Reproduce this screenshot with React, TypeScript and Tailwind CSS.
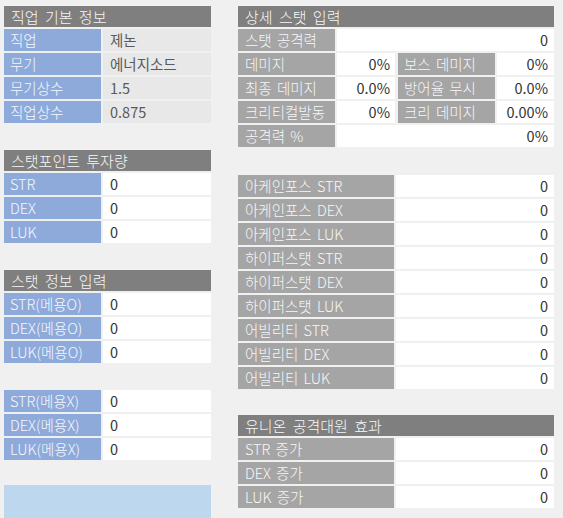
import React from "react";

const font = { fontFamily: '"Noto Sans CJK KR", "Noto Sans", sans-serif' };

const labelTxt = "text-[14.5px] leading-[22px] [word-spacing:2px] font-light whitespace-nowrap overflow-hidden";
const valTxt = "text-[14.5px] leading-[22px] whitespace-nowrap";

function Header({ children }: { children: React.ReactNode }) {
  return (
    <div className="h-[21px] bg-[#7f7f7f] text-[#f7f7f7] text-[15px] leading-[21px] [word-spacing:3px] font-light pl-[7px] whitespace-nowrap overflow-hidden">
      {children}
    </div>
  );
}

function BlueRow({ label, value, gray }: { label: string; value: string; gray?: boolean }) {
  return (
    <div className="flex h-[22px] gap-[2px]">
      <div className={`w-[97px] bg-[#8eaadb] text-[#f6f8fc] pl-[6px] ${labelTxt}`}>{label}</div>
      <div
        className={`flex-1 pl-[7px] ${valTxt} ${
          gray ? "bg-[#e8e8e8] text-[#5a5a5a]" : "bg-white text-[#333333]"
        }`}
      >
        {value}
      </div>
    </div>
  );
}

function GrayRow({ label, value }: { label: string; value: string }) {
  return (
    <div className="flex h-[22px] gap-[2px]">
      <div className={`w-[156px] bg-[#a5a5a5] text-[#f7f7f7] pl-[7px] ${labelTxt}`}>{label}</div>
      <div className={`flex-1 bg-white text-[#333333] pr-[6px] text-right ${valTxt}`}>{value}</div>
    </div>
  );
}

function PairRow({ l1, v1, l2, v2 }: { l1: string; v1: string; l2: string; v2: string }) {
  return (
    <div className="flex h-[22px]">
      <div className={`w-[97px] bg-[#a5a5a5] text-[#f7f7f7] pl-[7px] ${labelTxt}`}>{l1}</div>
      <div className={`w-[58px] ml-[2px] bg-white text-[#333333] pr-[5px] text-right ${valTxt}`}>{v1}</div>
      <div className={`w-[97px] ml-[3px] bg-[#a5a5a5] text-[#f7f7f7] pl-[6px] ${labelTxt}`}>{l2}</div>
      <div className={`flex-1 ml-[2px] bg-white text-[#333333] pr-[6px] text-right ${valTxt}`}>{v2}</div>
    </div>
  );
}

function WideRow({ label, value }: { label: string; value: string }) {
  return (
    <div className="flex h-[22px]">
      <div className={`w-[97px] bg-[#a5a5a5] text-[#f7f7f7] pl-[7px] ${labelTxt}`}>{label}</div>
      <div className={`flex-1 ml-[2px] bg-white text-[#333333] pr-[6px] text-right ${valTxt}`}>{value}</div>
    </div>
  );
}

export default function App() {
  return (
    <div className="w-[563px] h-[518px] bg-[#f0f0f0] overflow-hidden" style={font}>
      <div className="flex pt-[6px] pl-[4px] gap-[27px]">
        {/* Left column */}
        <div className="w-[207px] flex flex-col">
          <div className="flex flex-col gap-[2px]">
            <Header>직업 기본 정보</Header>
            <BlueRow label="직업" value="제논" gray />
            <BlueRow label="무기" value="에너지소드" gray />
            <BlueRow label="무기상수" value="1.5" gray />
            <BlueRow label="직업상수" value="0.875" gray />
          </div>
          <div className="flex flex-col gap-[2px] mt-[27px]">
            <Header>스탯포인트 투자량</Header>
            <BlueRow label="STR" value="0" />
            <BlueRow label="DEX" value="0" />
            <BlueRow label="LUK" value="0" />
          </div>
          <div className="flex flex-col gap-[2px] mt-[27px]">
            <Header>스탯 정보 입력</Header>
            <BlueRow label="STR(메용O)" value="0" />
            <BlueRow label="DEX(메용O)" value="0" />
            <BlueRow label="LUK(메용O)" value="0" />
          </div>
          <div className="flex flex-col gap-[2px] mt-[27px]">
            <BlueRow label="STR(메용X)" value="0" />
            <BlueRow label="DEX(메용X)" value="0" />
            <BlueRow label="LUK(메용X)" value="0" />
          </div>
          <div className="mt-[25px] h-[40px] bg-[#bdd7ee]" />
        </div>

        {/* Right column */}
        <div className="w-[316px] flex flex-col">
          <div className="flex flex-col gap-[2px]">
            <Header>상세 스탯 입력</Header>
            <WideRow label="스탯 공격력" value="0" />
            <PairRow l1="데미지" v1="0%" l2="보스 데미지" v2="0%" />
            <PairRow l1="최종 데미지" v1="0.0%" l2="방어율 무시" v2="0.0%" />
            <PairRow l1="크리티컬발동" v1="0%" l2="크리 데미지" v2="0.00%" />
            <WideRow label="공격력 %" value="0%" />
          </div>
          <div className="flex flex-col gap-[2px] mt-[28px]">
            <GrayRow label="아케인포스 STR" value="0" />
            <GrayRow label="아케인포스 DEX" value="0" />
            <GrayRow label="아케인포스 LUK" value="0" />
            <GrayRow label="하이퍼스탯 STR" value="0" />
            <GrayRow label="하이퍼스탯 DEX" value="0" />
            <GrayRow label="하이퍼스탯 LUK" value="0" />
            <GrayRow label="어빌리티 STR" value="0" />
            <GrayRow label="어빌리티 DEX" value="0" />
            <GrayRow label="어빌리티 LUK" value="0" />
          </div>
          <div className="flex flex-col gap-[2px] mt-[26px]">
            <Header>유니온 공격대원 효과</Header>
            <GrayRow label="STR 증가" value="0" />
            <GrayRow label="DEX 증가" value="0" />
            <GrayRow label="LUK 증가" value="0" />
          </div>
        </div>
      </div>
    </div>
  );
}
